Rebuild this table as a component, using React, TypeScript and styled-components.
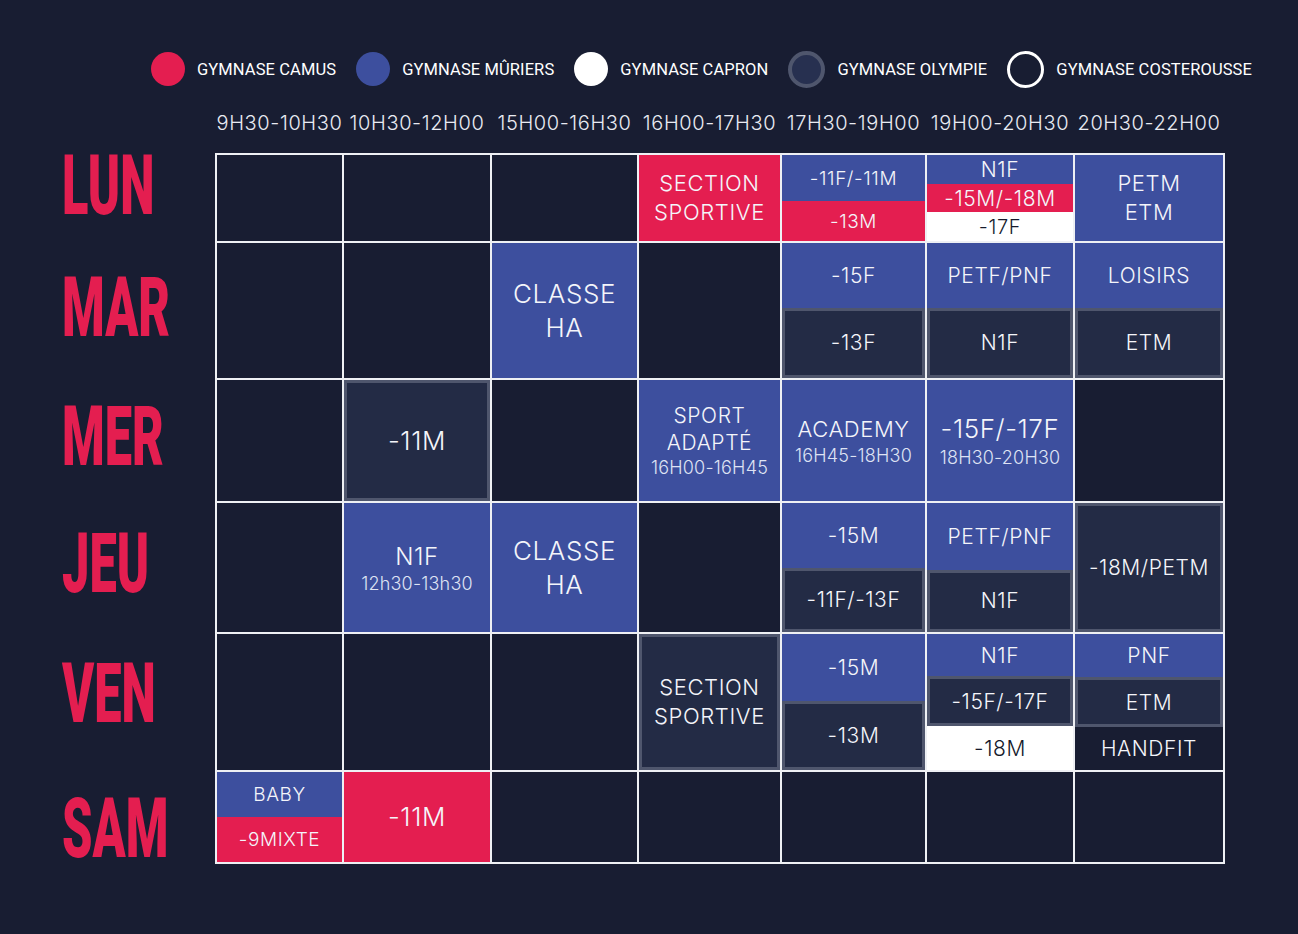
import * as React from "react";
import styled, { createGlobalStyle, css } from "styled-components";

const colors = {
  page: "#181d32",
  red: "#e41e50",
  blue: "#3d4f9e",
  olympie: "#232b45",
  olympieEdge: "#4f566d",
  line: "#eef0f4",
  text: "#f4f5fa",
  ink: "#151a2c",
};

// widths / heights of the cells between the 2px white lines
const COLS = [125, 146, 145, 141, 143, 146, 148];
const ROWS = [86, 135, 121, 129, 136, 90];

type Kind = "camus" | "muriers" | "capron" | "olympie" | "costerousse";

type Line = { text: string; size: number; sub?: boolean };
type Block = { kind: Kind; lines: Line[]; grow?: number };

const l = (text: string, size = 21, sub = false): Line => ({ text, size, sub });

const GlobalStyle = createGlobalStyle`
  html, body {
    margin: 0;
    padding: 0;
    background: ${colors.page};
  }
  body {
    font-family: Inter, "Open Sans", sans-serif;
    color: ${colors.text};
  }
`;

const Page = styled.div`
  width: 1298px;
  min-height: 934px;
  box-sizing: border-box;
  padding: 52px 0 0 62px;
  background: ${colors.page};
`;

const Legend = styled.div`
  display: flex;
  justify-content: flex-end;
  align-items: center;
  gap: 20px;
  height: 34px;
  padding-right: 46px;
`;

const LegendItem = styled.div`
  display: flex;
  align-items: center;
  gap: 12px;
`;

const Dot = styled.span<{ $kind: Kind }>`
  display: block;
  box-sizing: border-box;
  width: 34px;
  height: 34px;
  border-radius: 50%;
  ${({ $kind }) =>
    $kind === "camus"
      ? css`background: ${colors.red};`
      : $kind === "muriers"
      ? css`background: ${colors.blue};`
      : $kind === "capron"
      ? css`background: #ffffff;`
      : $kind === "olympie"
      ? css`
          width: 37px;
          height: 37px;
          background: #273050;
          border: 4px solid #4f566d;
        `
      : css`
          width: 37px;
          height: 37px;
          background: transparent;
          border: 3px solid #ffffff;
        `}
`;

const LegendText = styled.span`
  font-family: Roboto, "Liberation Sans", sans-serif;
  font-weight: 400;
  font-size: 16.5px;
  letter-spacing: 0.1px;
  text-transform: uppercase;
  color: #ffffff;
`;

const TimesRow = styled.div`
  display: grid;
  grid-template-columns: ${COLS.map((c) => `${c}px`).join(" ")};
  column-gap: 2px;
  margin: 24px 0 0 155px;
  height: 26px;
`;

const Time = styled.div`
  display: flex;
  justify-content: center;
  align-items: center;
  white-space: nowrap;
  font-size: 20px;
  font-weight: 300;
  letter-spacing: 0.6px;
  color: #e9ebf2;
`;

const Body = styled.div`
  display: flex;
  margin-top: 17px;
`;

const DayColumn = styled.div`
  width: 153px;
  display: grid;
  grid-template-rows: ${ROWS.map((r) => `${r}px`).join(" ")};
  row-gap: 2px;
  padding-top: 2px;
`;

const DayLabel = styled.div<{ $shift: number }>`
  display: flex;
  align-items: center;
  font-family: Roboto, "Liberation Sans", sans-serif;
  font-weight: 900;
  font-size: 84px;
  line-height: 1;
  color: ${colors.red};
  white-space: nowrap;
  transform: translateY(${({ $shift }) => $shift}px) scaleX(0.58);
  transform-origin: left center;
`;

const Table = styled.div`
  display: grid;
  grid-template-columns: ${COLS.map((c) => `${c}px`).join(" ")};
  grid-template-rows: ${ROWS.map((r) => `${r}px`).join(" ")};
  gap: 2px;
  padding: 2px;
  background: ${colors.line};
  align-self: flex-start;
`;

const Cell = styled.div`
  display: flex;
  flex-direction: column;
  background: ${colors.page};
  overflow: hidden;
`;

const Slot = styled.div<{ $kind: Kind; $grow: number }>`
  flex: ${({ $grow }) => $grow} 1 0;
  min-height: 0;
  box-sizing: border-box;
  display: flex;
  flex-direction: column;
  justify-content: center;
  align-items: center;
  ${({ $kind }) =>
    $kind === "camus"
      ? css`background: ${colors.red};`
      : $kind === "muriers"
      ? css`background: ${colors.blue};`
      : $kind === "capron"
      ? css`
          background: #ffffff;
          color: ${colors.ink};
        `
      : $kind === "olympie"
      ? css`
          background: ${colors.olympie};
          border: 3px solid ${colors.olympieEdge};
        `
      : css`background: transparent;`}
`;

const Label = styled.div<{ $size: number; $sub?: boolean }>`
  font-size: ${({ $size }) => $size}px;
  font-weight: 300;
  line-height: ${({ $size }) => Math.round($size * 1.3)}px;
  letter-spacing: ${({ $sub }) => ($sub ? "0.2px" : "0.6px")};
  text-align: center;
  white-space: nowrap;
  color: ${({ $sub }) => ($sub ? "#dfe3f4" : "inherit")};
`;

const legend: { kind: Kind; name: string }[] = [
  { kind: "camus", name: "Gymnase Camus" },
  { kind: "muriers", name: "Gymnase Mûriers" },
  { kind: "capron", name: "Gymnase Capron" },
  { kind: "olympie", name: "Gymnase Olympie" },
  { kind: "costerousse", name: "Gymnase Costerousse" },
];

const times = [
  "9H30-10H30",
  "10H30-12H00",
  "15H00-16H30",
  "16H00-17H30",
  "17H30-19H00",
  "19H00-20H30",
  "20H30-22H00",
];

const days = [
  { name: "LUN", shift: -12 },
  { name: "MAR", shift: -3 },
  { name: "MER", shift: -4 },
  { name: "JEU", shift: -4 },
  { name: "VEN", shift: -8 },
  { name: "SAM", shift: 12 },
];

const schedule: (Block[] | null)[][] = [
  // LUN
  [
    null,
    null,
    null,
    [{ kind: "camus", lines: [l("SECTION", 22), l("SPORTIVE", 22)] }],
    [
      { kind: "muriers", lines: [l("-11F/-11M", 19)], grow: 45 },
      { kind: "camus", lines: [l("-13M", 19)], grow: 39 },
    ],
    [
      { kind: "muriers", lines: [l("N1F", 21)] },
      { kind: "camus", lines: [l("-15M/-18M", 21)] },
      { kind: "capron", lines: [l("-17F", 20)] },
    ],
    [{ kind: "muriers", lines: [l("PETM", 22), l("ETM", 22)] }],
  ],
  // MAR
  [
    null,
    null,
    [{ kind: "muriers", lines: [l("CLASSE", 26), l("HA", 26)] }],
    null,
    [
      { kind: "muriers", lines: [l("-15F")] },
      { kind: "olympie", lines: [l("-13F")] },
    ],
    [
      { kind: "muriers", lines: [l("PETF/PNF")] },
      { kind: "olympie", lines: [l("N1F")] },
    ],
    [
      { kind: "muriers", lines: [l("LOISIRS")] },
      { kind: "olympie", lines: [l("ETM")] },
    ],
  ],
  // MER
  [
    null,
    [{ kind: "olympie", lines: [l("-11M", 26)] }],
    null,
    [
      {
        kind: "muriers",
        lines: [l("SPORT", 21), l("ADAPTÉ", 21), l("16H00-16H45", 18, true)],
      },
    ],
    [{ kind: "muriers", lines: [l("ACADEMY", 22), l("16H45-18H30", 18, true)] }],
    [{ kind: "muriers", lines: [l("-15F/-17F", 26), l("18H30-20H30", 18, true)] }],
    null,
  ],
  // JEU
  [
    null,
    [{ kind: "muriers", lines: [l("N1F", 24), l("12h30-13h30", 18, true)] }],
    [{ kind: "muriers", lines: [l("CLASSE", 26), l("HA", 26)] }],
    null,
    [
      { kind: "muriers", lines: [l("-15M")], grow: 67 },
      { kind: "olympie", lines: [l("-11F/-13F")], grow: 60 },
    ],
    [
      { kind: "muriers", lines: [l("PETF/PNF")], grow: 69 },
      { kind: "olympie", lines: [l("N1F")], grow: 58 },
    ],
    [{ kind: "olympie", lines: [l("-18M/PETM")] }],
  ],
  // VEN
  [
    null,
    null,
    null,
    [{ kind: "olympie", lines: [l("SECTION", 22), l("SPORTIVE", 22)] }],
    [
      { kind: "muriers", lines: [l("-15M")], grow: 69 },
      { kind: "olympie", lines: [l("-13M")], grow: 65 },
    ],
    [
      { kind: "muriers", lines: [l("N1F")], grow: 44 },
      { kind: "olympie", lines: [l("-15F/-17F")], grow: 46 },
      { kind: "capron", lines: [l("-18M")], grow: 46 },
    ],
    [
      { kind: "muriers", lines: [l("PNF")], grow: 44 },
      { kind: "olympie", lines: [l("ETM")], grow: 46 },
      { kind: "costerousse", lines: [l("HANDFIT")], grow: 44 },
    ],
  ],
  // SAM
  [
    [
      { kind: "muriers", lines: [l("BABY", 19)] },
      { kind: "camus", lines: [l("-9MIXTE", 19)] },
    ],
    [{ kind: "camus", lines: [l("-11M", 26)] }],
    null,
    null,
    null,
    null,
    null,
  ],
];

export default function App() {
  return (
    <Page>
      <GlobalStyle />
      <Legend>
        {legend.map((item) => (
          <LegendItem key={item.kind}>
            <Dot $kind={item.kind} />
            <LegendText>{item.name}</LegendText>
          </LegendItem>
        ))}
      </Legend>

      <TimesRow>
        {times.map((t) => (
          <Time key={t}>{t}</Time>
        ))}
      </TimesRow>

      <Body>
        <DayColumn>
          {days.map((d) => (
            <DayLabel key={d.name} $shift={d.shift}>
              {d.name}
            </DayLabel>
          ))}
        </DayColumn>

        <Table>
          {schedule.map((row, r) =>
            row.map((blocks, c) => (
              <Cell key={`${r}-${c}`}>
                {blocks?.map((b, i) => (
                  <Slot key={i} $kind={b.kind} $grow={b.grow ?? 1}>
                    {b.lines.map((line) => (
                      <Label key={line.text} $size={line.size} $sub={line.sub}>
                        {line.text}
                      </Label>
                    ))}
                  </Slot>
                ))}
              </Cell>
            ))
          )}
        </Table>
      </Body>
    </Page>
  );
}
